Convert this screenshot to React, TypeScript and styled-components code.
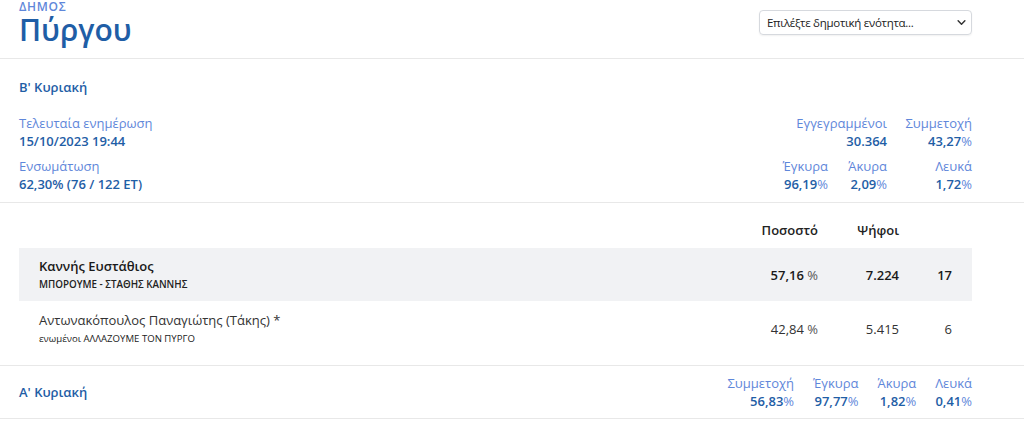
import React from "react";
import styled, { createGlobalStyle } from "styled-components";

const Global = createGlobalStyle`
  html, body { margin: 0; padding: 0; background: #fff; }
  body { font-family: "Open Sans", "Noto Sans", sans-serif; color: #222; }
  * { box-sizing: border-box; }
`;

const DARK = "#1f5ea6";
const LIGHT = "#5f87da";

const Page = styled.div`
  width: 1024px;
`;

const Header = styled.header`
  height: 59px;
  border-bottom: 1px solid #e8e8e8;
  padding: 0 52px 0 19px;
  display: flex;
  justify-content: space-between;
  align-items: flex-start;
`;

const TitleBlock = styled.div`
  display: flex;
  flex-direction: column;
`;

const Kicker = styled.div`
  font-size: 12px;
  line-height: 13px;
  font-weight: 600;
  color: ${LIGHT};
  text-transform: uppercase;
  letter-spacing: 0.7px;
`;

const Title = styled.h1`
  margin: 0;
  font-size: 30px;
  line-height: 34px;
  font-weight: 600;
  color: ${DARK};
`;

const SelectBox = styled.div`
  margin-top: 10px;
  width: 213px;
  height: 25px;
  border: 1px solid #d6d9de;
  border-radius: 4px;
  box-shadow: 0 1px 2px rgba(0, 0, 0, 0.06);
  display: flex;
  align-items: center;
  justify-content: space-between;
  padding: 0 5px 0 7px;
  font-size: 11.5px;
  letter-spacing: -0.3px;
  color: #222;
`;

const Section = styled.section`
  border-bottom: 1px solid #e8e8e8;
  padding: 19px 52px 9px 19px;
`;

const RoundTitle = styled.div`
  font-size: 13px;
  line-height: 18px;
  font-weight: 600;
  color: ${DARK};
`;

const InfoRow = styled.div`
  margin-top: 18px;
  display: flex;
  justify-content: space-between;
`;

const InfoCol = styled.div`
  display: flex;
  flex-direction: column;
  gap: 7px;
`;

const Label = styled.div`
  font-size: 13px;
  line-height: 18px;
  color: ${LIGHT};
`;

const Value = styled.div`
  font-size: 13px;
  line-height: 18px;
  font-weight: 600;
  color: ${DARK};
`;

const Pct = styled.span`
  font-weight: 400;
  color: ${LIGHT};
`;

const StatGrid = styled.div`
  display: grid;
  grid-template-columns: 45px 59px 85px;
  row-gap: 7px;
`;

const Stat = styled.div<{ $span?: number }>`
  grid-column: ${(p) => (p.$span ? `span ${p.$span}` : "auto")};
  text-align: right;
  white-space: nowrap;
  display: flex;
  flex-direction: column;
  align-items: flex-end;
`;

const TableSection = styled.section`
  border-bottom: 1px solid #e8e8e8;
  padding: 18px 52px 10px 19px;
`;

const Grid = styled.div`
  display: grid;
  grid-template-columns: 1fr 100px 81px 53px;
  padding: 0 20px;
  align-items: center;
`;

const HeadRow = styled(Grid)`
  font-size: 13px;
  line-height: 18px;
  font-weight: 600;
  color: #222;
  margin-bottom: 9px;
`;

const Row = styled(Grid)<{ $hl?: boolean }>`
  background: ${(p) => (p.$hl ? "#f1f2f4" : "transparent")};
  padding-top: 9px;
  padding-bottom: 9px;
  font-weight: ${(p) => (p.$hl ? 600 : 400)};
  color: ${(p) => (p.$hl ? "#1a1a1a" : "#333")};
  margin-bottom: ${(p) => (p.$hl ? "1px" : "0")};
`;

const Num = styled.div`
  text-align: right;
  font-size: 13px;
  line-height: 18px;
`;

const PctSign = styled.span`
  font-weight: 400;
  color: #555;
`;

const Name = styled.div`
  font-size: 13px;
  line-height: 18px;
`;

const Party = styled.div<{ $hl?: boolean }>`
  margin-top: 3px;
  font-size: ${(p) => (p.$hl ? "9.8px" : "9.6px")};
  line-height: 14px;
  font-weight: ${(p) => (p.$hl ? 600 : 400)};
  color: #222;
`;

const FirstRound = styled.section`
  border-bottom: 1px solid #e8e8e8;
  padding: 8px 52px 8px 19px;
  display: flex;
  justify-content: space-between;
  align-items: center;
`;

const StatRow = styled.div`
  display: flex;
  gap: 19px;
`;

const Chevron = () => (
  <svg width="9" height="9" viewBox="0 0 16 16">
    <path d="M2 5l6 6 6-6" fill="none" stroke="#333" strokeWidth="2.6" strokeLinecap="round" strokeLinejoin="round" />
  </svg>
);

const P = ({ v }: { v: string }) => (
  <>
    {v}
    <Pct>%</Pct>
  </>
);

export default function App() {
  return (
    <Page>
      <Global />
      <Header>
        <TitleBlock>
          <Kicker>Δημος</Kicker>
          <Title>Πύργου</Title>
        </TitleBlock>
        <SelectBox>
          <span>Επιλέξτε δημοτική ενότητα...</span>
          <Chevron />
        </SelectBox>
      </Header>

      <Section>
        <RoundTitle>Β' Κυριακή</RoundTitle>
        <InfoRow>
          <InfoCol>
            <div>
              <Label>Τελευταία ενημέρωση</Label>
              <Value>15/10/2023 19:44</Value>
            </div>
            <div>
              <Label>Ενσωμάτωση</Label>
              <Value>62,30% (76 / 122 ET)</Value>
            </div>
          </InfoCol>
          <StatGrid>
            <Stat $span={2}>
              <Label>Εγγεγραμμένοι</Label>
              <Value>30.364</Value>
            </Stat>
            <Stat>
              <Label>Συμμετοχή</Label>
              <Value><P v="43,27" /></Value>
            </Stat>
            <Stat>
              <Label>Έγκυρα</Label>
              <Value><P v="96,19" /></Value>
            </Stat>
            <Stat>
              <Label>Άκυρα</Label>
              <Value><P v="2,09" /></Value>
            </Stat>
            <Stat>
              <Label>Λευκά</Label>
              <Value><P v="1,72" /></Value>
            </Stat>
          </StatGrid>
        </InfoRow>
      </Section>

      <TableSection>
        <HeadRow>
          <div />
          <Num>Ποσοστό</Num>
          <Num>Ψήφοι</Num>
          <div />
        </HeadRow>
        <Row $hl>
          <div>
            <Name>Καννής Ευστάθιος</Name>
            <Party $hl>ΜΠΟΡΟΥΜΕ - ΣΤΑΘΗΣ ΚΑΝΝΗΣ</Party>
          </div>
          <Num>57,16 <PctSign>%</PctSign></Num>
          <Num>7.224</Num>
          <Num>17</Num>
        </Row>
        <Row>
          <div>
            <Name>Αντωνακόπουλος Παναγιώτης (Τάκης) *</Name>
            <Party>ενωμένοι ΑΛΛΑΖΟΥΜΕ ΤΟΝ ΠΥΡΓΟ</Party>
          </div>
          <Num>42,84 <PctSign>%</PctSign></Num>
          <Num>5.415</Num>
          <Num>6</Num>
        </Row>
      </TableSection>

      <FirstRound>
        <RoundTitle>Α' Κυριακή</RoundTitle>
        <StatRow>
          <Stat>
            <Label>Συμμετοχή</Label>
            <Value><P v="56,83" /></Value>
          </Stat>
          <Stat>
            <Label>Έγκυρα</Label>
            <Value><P v="97,77" /></Value>
          </Stat>
          <Stat>
            <Label>Άκυρα</Label>
            <Value><P v="1,82" /></Value>
          </Stat>
          <Stat>
            <Label>Λευκά</Label>
            <Value><P v="0,41" /></Value>
          </Stat>
        </StatRow>
      </FirstRound>
    </Page>
  );
}
